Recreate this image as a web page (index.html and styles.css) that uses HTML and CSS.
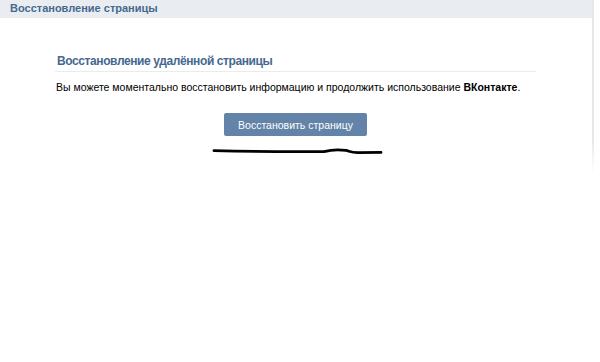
FILE: index.html
```html
<!DOCTYPE html>
<html lang="ru">

<head>
    <meta charset="utf-8">
    <title>Восстановление страницы</title>
    <link rel="stylesheet" href="styles.css">
</head>

<body>
    <div id="page">
        <div class="page-header">Восстановление страницы</div>

        <div class="restore-box">
            <h2>Восстановление удалённой страницы</h2>
            <p>Вы можете моментально восстановить информацию и продолжить использование <b>ВКонтакте</b>.</p>
            <div class="actions">
                <button type="button">Восстановить страницу</button>
                <svg class="scribble" width="172" height="9" viewBox="0 0 172 9">
                    <path d="M2 3.6 C40 4.6 80 4.8 112 4.6 C118 3 128 2.6 134 3.4 C138 4.4 139 5.6 146 5.6 L169 5.4"
                        fill="none" stroke="#000" stroke-width="2.8" stroke-linecap="round" stroke-linejoin="round" />
                </svg>
            </div>
        </div>
    </div>
</body>

</html>
```
FILE: styles.css
```css
body {
    margin: 0;
    background-color: #fff;
    font-family: 'Liberation Sans', Arial, sans-serif;
    font-size: 10.5px;
    color: #000;
}

#page {
    width: 592px;
    height: 362px;
    border-right: 2px solid #fff;
    position: relative;
}

#page::after {
    content: '';
    position: absolute;
    top: 0;
    right: -2px;
    width: 2px;
    height: 174px;
    background: linear-gradient(#e4e8ed 80%, #fff);
}

.page-header {
    height: 18px;
    line-height: 16px;
    padding-left: 10px;
    background-color: #e9edf1;
    color: #45688e;
    font-weight: bold;
    font-size: 11px;
}

.restore-box {
    margin: 35px 56px 0 55px;
}

h2 {
    margin: 0;
    padding: 1px 0 3px 2px;
    font-size: 12px;
    font-weight: bold;
    letter-spacing: -0.4px;
    color: #45688e;
    border-bottom: 1px solid #e9ecef;
}

p {
    margin: 8px 0 0 1px;
    line-height: 14px;
    white-space: nowrap;
}

p b {
    font-weight: bold;
}

.actions {
    display: flex;
    flex-direction: column;
    align-items: center;
    margin-top: 19px;
}

button {
    background-color: #6383a8;
    color: #fff;
    border: none;
    border-radius: 2px;
    padding: 0 14px;
    height: 23px;
    font-family: inherit;
    font-size: 10.5px;
}

.scribble {
    margin-top: 11px;
    margin-left: 5px;
}
```
